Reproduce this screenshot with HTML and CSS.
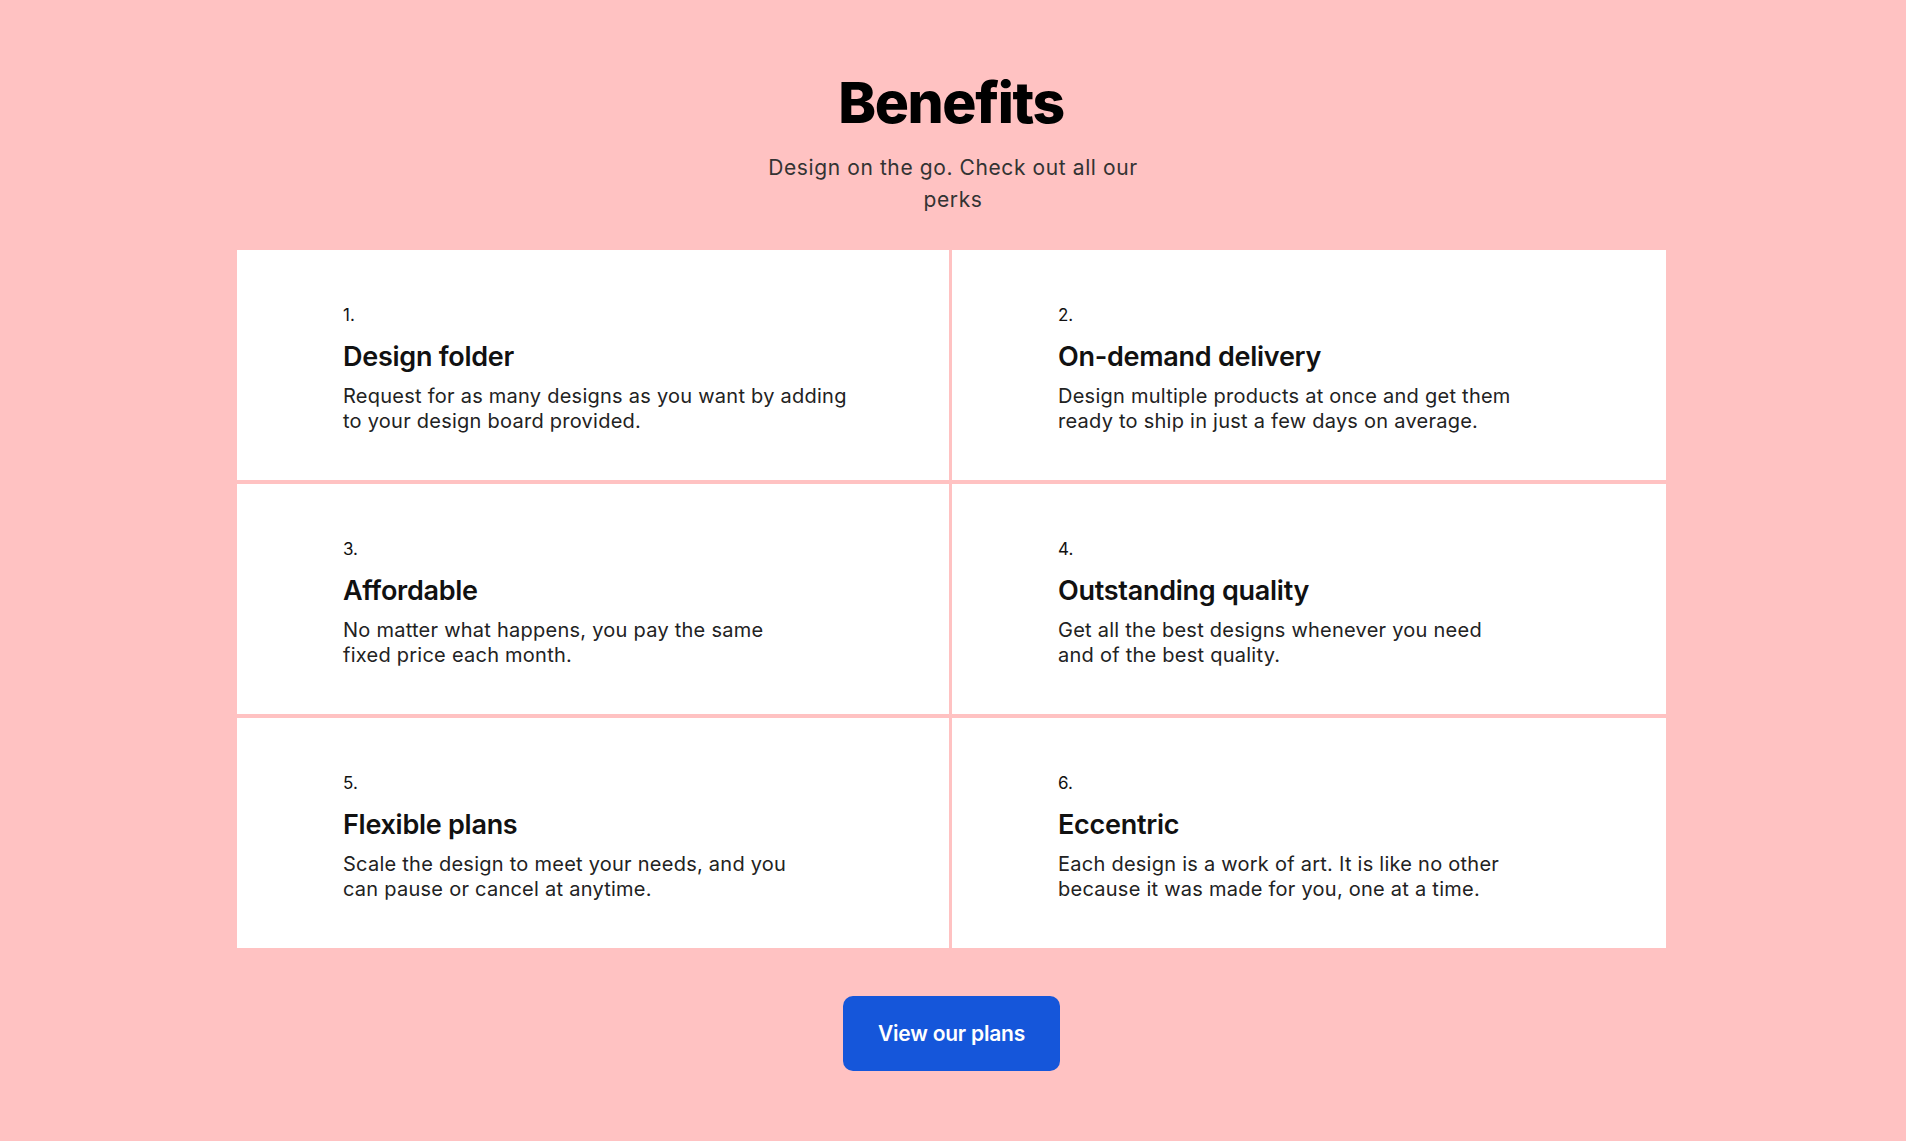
FILE: index.html
```html
<!DOCTYPE html>
<html lang="en">
<head>
<meta charset="utf-8">
<title>Benefits</title>
<link rel="stylesheet" href="styles.css">
</head>
<body>
<section class="benefits">
  <h1 class="title">Benefits</h1>
  <p class="subtitle">Design on the go. Check out all our perks</p>
  <div class="grid">
    <div class="card">
      <div class="num">1.</div>
      <h3 class="card-title">Design folder</h3>
      <p class="desc">Request for as many designs as you want by adding<br>to your design board provided.</p>
    </div>
    <div class="card">
      <div class="num">2.</div>
      <h3 class="card-title">On-demand delivery</h3>
      <p class="desc">Design multiple products at once and get them<br>ready to ship in just a few days on average.</p>
    </div>
    <div class="card">
      <div class="num">3.</div>
      <h3 class="card-title">Affordable</h3>
      <p class="desc">No matter what happens, you pay the same<br>fixed price each month.</p>
    </div>
    <div class="card">
      <div class="num">4.</div>
      <h3 class="card-title">Outstanding quality</h3>
      <p class="desc">Get all the best designs whenever you need<br>and of the best quality.</p>
    </div>
    <div class="card">
      <div class="num">5.</div>
      <h3 class="card-title">Flexible plans</h3>
      <p class="desc">Scale the design to meet your needs, and you<br>can pause or cancel at anytime.</p>
    </div>
    <div class="card">
      <div class="num">6.</div>
      <h3 class="card-title">Eccentric</h3>
      <p class="desc">Each design is a work of art. It is like no other<br>because it was made for you, one at a time.</p>
    </div>
  </div>
  <a class="btn" href="#">View our plans</a>
</section>
</body>
</html>
```
FILE: styles.css
```css
* { box-sizing: border-box; }
html, body {
  margin: 0;
  padding: 0;
  background: #ffc2c2;
}
body {
  font-family: Inter, "Noto Sans", sans-serif;
  color: #111;
  min-height: 1141px;
}
.benefits {
  display: flex;
  flex-direction: column;
  align-items: center;
  padding-top: 72px;
}
.title {
  margin: 0;
  font-size: 57px;
  line-height: 1.1;
  font-weight: 800;
  letter-spacing: -0.025em;
  color: #000;
  transform: translateX(-2px);
}
.subtitle {
  margin: 17px 0 0;
  width: 420px;
  text-align: center;
  font-size: 21px;
  line-height: 32px;
  letter-spacing: 0.6px;
  color: #333;
}
.grid {
  margin-top: 34px;
  margin-right: 3px;
  width: 1429px;
  display: grid;
  grid-template-columns: 712px 714px;
  grid-auto-rows: 230px;
  column-gap: 3px;
  row-gap: 4px;
}
.card {
  background: #fff;
  padding: 54px 40px 0 106px;
}
.num {
  font-size: 17px;
  line-height: 22px;
  color: #111;
}
.card-title {
  margin: 15px 0 0;
  font-size: 27px;
  line-height: 1.2;
  font-weight: 600;
  letter-spacing: -0.01em;
  color: #111;
}
.desc {
  margin: 11px 0 0;
  font-size: 20px;
  line-height: 25px;
  letter-spacing: 0.25px;
  color: #222;
}
.btn {
  margin-top: 48px;
  margin-right: 3px;
  width: 217px;
  height: 75px;
  display: flex;
  align-items: center;
  justify-content: center;
  background: #1556da;
  border-radius: 10px;
  color: #fff;
  text-decoration: none;
  font-size: 21px;
  font-weight: 600;
  letter-spacing: -0.01em;
}
```
